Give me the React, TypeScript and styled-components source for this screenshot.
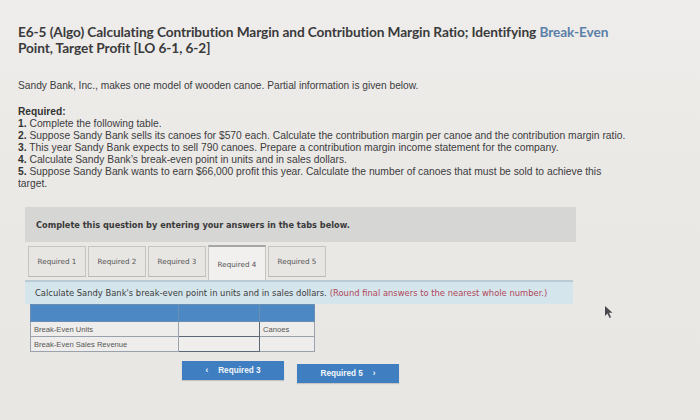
import React from "react";
import styled, { createGlobalStyle } from "styled-components";

const Global = createGlobalStyle`
  html, body { margin: 0; padding: 0; }
  body {
    width: 700px; height: 420px; overflow: hidden;
    background: linear-gradient(180deg, #eeedeb 0%, #ebe9e6 40%, #e9e7e3 100%);
    font-family: "Liberation Sans", Arial, sans-serif;
  }
`;

const Page = styled.div`
  padding: 24px 0 0 18px;
  width: 682px;
  position: relative;
  height: 396px;
`;

const Title = styled.h1`
  margin: 0;
  font-family: Lato, sans-serif;
  font-weight: 700;
  font-size: 13.7px;
  line-height: 16px;
  color: #3a3a3c;
  letter-spacing: -0.1px;
  width: 640px;
`;

const Link = styled.span`
  color: #5b7fa8;
`;

const Intro = styled.p`
  margin: 24px 0 0 0;
  font-size: 10.2px;
  line-height: 12px;
  color: #3c3c3e;
`;

const ReqHead = styled.div`
  margin-top: 14px;
  font-size: 10.2px;
  line-height: 12px;
  font-weight: 700;
  color: #333;
`;

const List = styled.div`
  font-size: 10.3px;
  line-height: 12px;
  color: #3c3c3e;
  width: 664px;
  white-space: nowrap;
`;

const Num = styled.b`
  font-weight: 700;
  color: #333;
`;

const Panel = styled.div`
  margin: 17px 0 0 7px;
  width: 551px;
  font-family: "DejaVu Sans", Verdana, sans-serif;
`;

const GrayBox = styled.div`
  background: #d6d6d4;
  height: 35px;
  display: flex;
  align-items: center;
  padding-left: 11px;
  font-size: 8.2px;
  font-weight: 700;
  color: #3a3a3a;
`;

const Tabs = styled.div`
  display: flex;
  align-items: flex-start;
  gap: 2px;
  margin: 3px 0 0 3px;
  height: 34px;
`;

const Tab = styled.div<{ $active?: boolean }>`
  width: 58px;
  height: ${(p) => (p.$active ? 35 : 31)}px;
  margin-top: ${(p) => (p.$active ? 0 : 1)}px;
  box-sizing: border-box;
  border: 1px solid #c4c4c2;
  border-bottom: ${(p) => (p.$active ? "none" : "1px solid #b8b8b6")};
  border-top: ${(p) => (p.$active ? "2px solid #a6a6a4" : "1px solid #c4c4c2")};
  background: ${(p) => (p.$active ? "#f1f0ee" : "#e7e6e3")};
  font-size: 7.2px;
  color: #555;
  display: flex;
  align-items: center;
  justify-content: center;
  padding-top: ${(p) => (p.$active ? 2 : 0)}px;
  white-space: nowrap;
  position: relative;
  z-index: ${(p) => (p.$active ? 1 : 0)};
`;

const Instruction = styled.div`
  margin-top: 1px;
  width: 548px;
  height: 24px;
  background: #d5e5ec;
  border-top: 2px solid #b9ccd6;
  box-sizing: border-box;
  display: flex;
  align-items: center;
  padding-left: 10px;
  font-size: 8.4px;
  color: #3b3b3b;
  white-space: nowrap;
`;

const Hint = styled.span`
  color: #b0475a;
  margin-left: 3px;
`;

const Table = styled.table`
  margin-left: 5px;
  border-collapse: collapse;
  font-family: "Liberation Sans", Arial, sans-serif;
  font-size: 7.6px;
  color: #555;
`;

const Th = styled.th<{ $w: number }>`
  width: ${(p) => p.$w}px;
  height: 16px;
  padding: 0;
  background: #4c88c4;
  border: 1px solid #6b8fb3;
`;

const Td = styled.td<{ $input?: boolean }>`
  height: 14px;
  padding: 0 3px;
  border: ${(p) => (p.$input ? "1.5px solid #5a6878" : "1px solid #9aa3ad")};
  background: ${(p) => (p.$input ? "#efeeec" : "#eeedeb")};
  vertical-align: middle;
  white-space: nowrap;
`;

const Buttons = styled.div`
  display: flex;
  gap: 13px;
  margin: 9px 0 0 157px;
  align-items: flex-start;
`;

const NavButton = styled.div<{ $offset?: number }>`
  width: 102px;
  height: 19px;
  margin-top: ${(p) => p.$offset || 0}px;
  background: #3e7ec1;
  color: #f4f7fb;
  font-family: "Liberation Sans", Arial, sans-serif;
  font-weight: 700;
  font-size: 8.2px;
  display: flex;
  align-items: center;
  justify-content: center;
  gap: 10px;
  box-shadow: 0 1px 1px rgba(0,0,0,0.15);
`;

const Cursor = styled.svg`
  position: absolute;
  left: 604px;
  top: 305px;
`;

export default function App() {
  return (
    <>
      <Global />
      <Page>
        <Title>
          E6-5 (Algo) Calculating Contribution Margin and Contribution Margin Ratio; Identifying{" "}
          <Link>Break-Even</Link>
          <br />
          Point, Target Profit [LO 6-1, 6-2]
        </Title>
        <Intro>Sandy Bank, Inc., makes one model of wooden canoe. Partial information is given below.</Intro>
        <ReqHead>Required:</ReqHead>
        <List>
          <div><Num>1.</Num> Complete the following table.</div>
          <div><Num>2.</Num> Suppose Sandy Bank sells its canoes for $570 each. Calculate the contribution margin per canoe and the contribution margin ratio.</div>
          <div><Num>3.</Num> This year Sandy Bank expects to sell 790 canoes. Prepare a contribution margin income statement for the company.</div>
          <div><Num>4.</Num> Calculate Sandy Bank’s break-even point in units and in sales dollars.</div>
          <div><Num>5.</Num> Suppose Sandy Bank wants to earn $66,000 profit this year. Calculate the number of canoes that must be sold to achieve this<br />target.</div>
        </List>
        <Panel>
          <GrayBox>Complete this question by entering your answers in the tabs below.</GrayBox>
          <Tabs>
            <Tab>Required 1</Tab>
            <Tab>Required 2</Tab>
            <Tab>Required 3</Tab>
            <Tab $active>Required 4</Tab>
            <Tab>Required 5</Tab>
          </Tabs>
          <Instruction>
            Calculate Sandy Bank's break-even point in units and in sales dollars.
            <Hint>(Round final answers to the nearest whole number.)</Hint>
          </Instruction>
          <Table>
            <thead>
              <tr>
                <Th $w={147} />
                <Th $w={80} />
                <Th $w={54} />
              </tr>
            </thead>
            <tbody>
              <tr>
                <Td>Break-Even Units</Td>
                <Td $input />
                <Td>Canoes</Td>
              </tr>
              <tr>
                <Td>Break-Even Sales Revenue</Td>
                <Td $input />
                <Td />
              </tr>
            </tbody>
          </Table>
          <Buttons>
            <NavButton><span>‹</span><span>Required 3</span></NavButton>
            <NavButton $offset={3}><span>Required 5</span><span>›</span></NavButton>
          </Buttons>
        </Panel>
        <Cursor width="12" height="14" viewBox="0 0 12 14">
          <path d="M1 1 L1 11 L3.5 8.5 L5.5 13 L7 12.3 L5 7.8 L8.5 7.8 Z" fill="#4a4a4e" />
        </Cursor>
      </Page>
    </>
  );
}
